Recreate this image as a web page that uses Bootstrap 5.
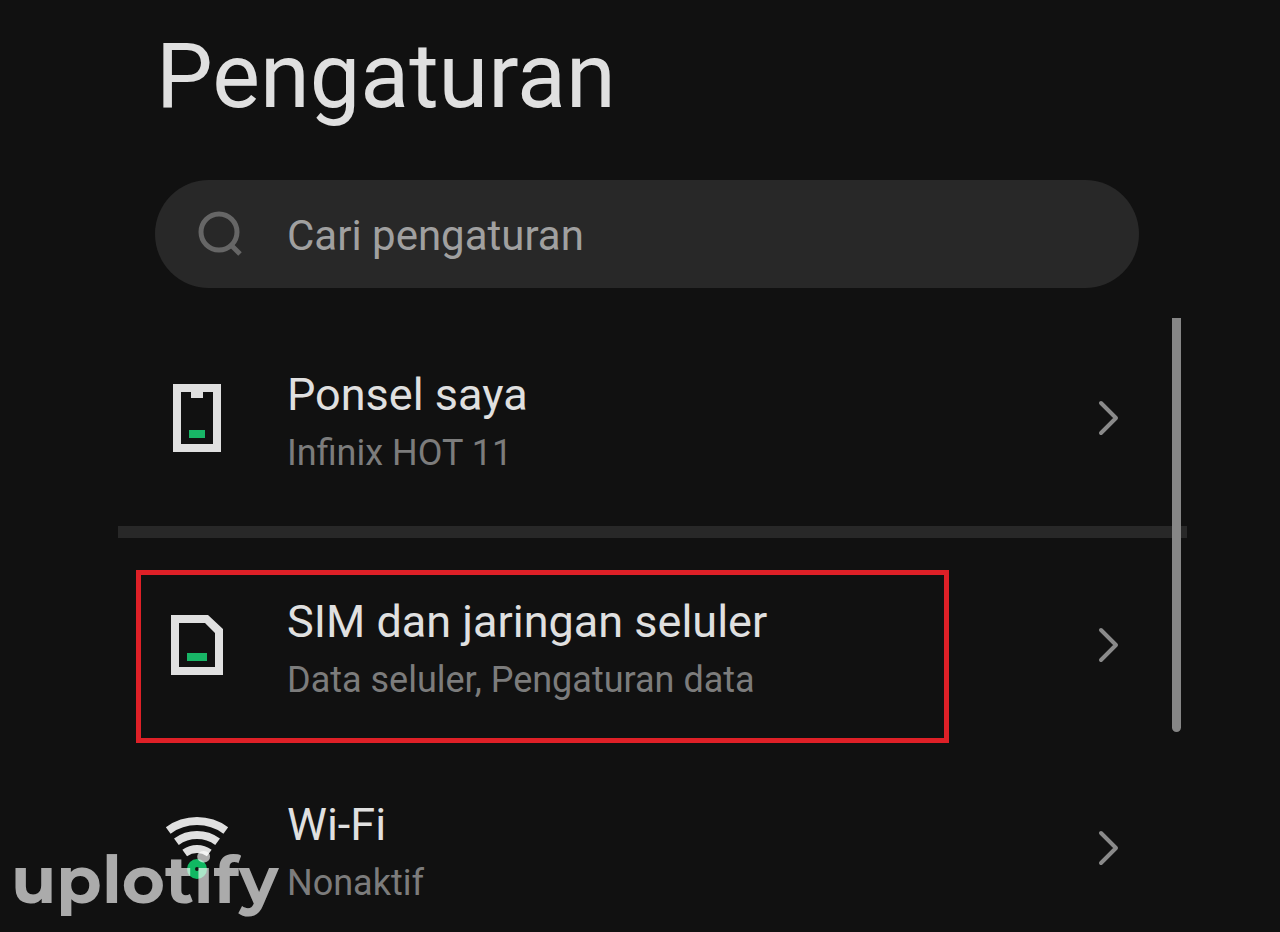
<!DOCTYPE html>
<html lang="id" data-bs-theme="dark">
<head>
<meta charset="utf-8">
<meta name="viewport" content="width=device-width, initial-scale=1">
<title>Pengaturan</title>
<link href="https://cdn.jsdelivr.net/npm/bootstrap@5.3.0/dist/css/bootstrap.min.css" rel="stylesheet">
<style>
  body { background: #111; color: #e0e0e0; font-family: Roboto, sans-serif; }
  .screen { padding: 23px 93px 0 118px; }
  .page-title { font-size: 90px; line-height: 108px; font-weight: 400; margin: 0 38px 49px; color: #e0e0e0; }
  .search-bar { height: 108px; margin: 0 48px 29px 37px; padding: 0 42px; gap: 42px; background: #282828; }
  .search-bar input, .search-bar input:focus { background: transparent; border: 0; box-shadow: none; padding: 4px 0 0; font-size: 42px; line-height: 60px; color: #e0e0e0; }
  .search-bar input::placeholder { color: #a0a0a0; opacity: 1; }
  .setting-row { height: 203px; padding: 0 67px 0 37px; gap: 48px; color: #e0e0e0; }
  .setting-name { font-size: 45px; line-height: 60px; }
  .setting-note { font-size: 36px; line-height: 56px; color: #7c7c7c; }
  .section-rule { height: 12px; margin: 6px 0; background: #282828; }
  .scroll-thumb { top: 1px; right: 6px; width: 9px; height: 414px; background: #868686; border-radius: 0 0 5px 5px; }
  .highlight { inset: 26px 238px 4px 18px; border: 5px solid #de2027; pointer-events: none; }
  .watermark { left: 11px; bottom: 10px; font: 700 66px/84px Montserrat, Inter, sans-serif; color: rgba(255, 255, 255, .65); pointer-events: none; }
</style>
</head>
<body class="vh-100 overflow-hidden position-relative">
<main class="screen">
  <h1 class="page-title">Pengaturan</h1>
  <form class="search-bar d-flex align-items-center rounded-pill" role="search">
    <svg class="flex-shrink-0" width="48" height="48" fill="none" stroke="#666" stroke-width="5" aria-hidden="true"><circle cx="22" cy="22" r="18"/><path d="M33 34l10 10"/></svg>
    <input class="form-control" type="text" placeholder="Cari pengaturan" aria-label="Cari pengaturan">
  </form>

  <div class="position-relative">
    <a href="#ponsel" class="setting-row d-flex align-items-center text-decoration-none">
      <svg class="flex-shrink-0" width="84" height="83" aria-hidden="true"><path fill="#e0e0e0" fill-rule="evenodd" d="M18 7H66V75H18ZM26 15V67H58V15H48V21H36V15Z"/><path fill="#18b566" d="M34 53h16v8H34z"/></svg>
      <span class="flex-grow-1 mt-2"><span class="setting-name d-block">Ponsel saya</span><span class="setting-note d-block">Infinix HOT 11</span></span>
      <svg class="flex-shrink-0" width="24" height="37" fill="none" stroke="#8a8a8a" stroke-width="4" stroke-linecap="round" stroke-linejoin="round" aria-hidden="true"><path d="M5 3l15 15L5 33"/></svg>
    </a>
    <div class="section-rule"></div>
    <div class="position-relative">
      <a href="#sim" class="setting-row d-flex align-items-center text-decoration-none">
        <svg class="flex-shrink-0" width="84" height="83" aria-hidden="true"><path fill="#e0e0e0" fill-rule="evenodd" d="M16 11H53L68 25V71H16ZM24 19V63H60V29L50 19Z"/><path fill="#18b566" d="M32 49h20v8H32z"/></svg>
        <span class="flex-grow-1 mt-2"><span class="setting-name d-block">SIM dan jaringan seluler</span><span class="setting-note d-block">Data seluler, Pengaturan data</span></span>
        <svg class="flex-shrink-0" width="24" height="37" fill="none" stroke="#8a8a8a" stroke-width="4" stroke-linecap="round" stroke-linejoin="round" aria-hidden="true"><path d="M5 3l15 15L5 33"/></svg>
      </a>
      <div class="highlight position-absolute"></div>
    </div>
    <a href="#wifi" class="setting-row d-flex align-items-center text-decoration-none">
      <svg class="flex-shrink-0" width="84" height="83" fill="none" stroke="#e0e0e0" stroke-width="8" aria-hidden="true"><path d="M13.2 23.4A49 49 0 0 1 70.8 23.4M21.4 34.7A35 35 0 0 1 62.6 34.7M29.7 46A21 21 0 0 1 54.3 46"/><circle cx="42" cy="62" r="6" stroke="#10b862"/></svg>
      <span class="flex-grow-1 mt-2"><span class="setting-name d-block">Wi-Fi</span><span class="setting-note d-block">Nonaktif</span></span>
      <svg class="flex-shrink-0" width="24" height="37" fill="none" stroke="#8a8a8a" stroke-width="4" stroke-linecap="round" stroke-linejoin="round" aria-hidden="true"><path d="M5 3l15 15L5 33"/></svg>
    </a>
    <div class="scroll-thumb position-absolute"></div>
  </div>
</main>
<div class="watermark position-absolute">uplotify</div>
<script src="https://cdn.jsdelivr.net/npm/bootstrap@5.3.0/dist/js/bootstrap.bundle.min.js"></script>
</body>
</html>
